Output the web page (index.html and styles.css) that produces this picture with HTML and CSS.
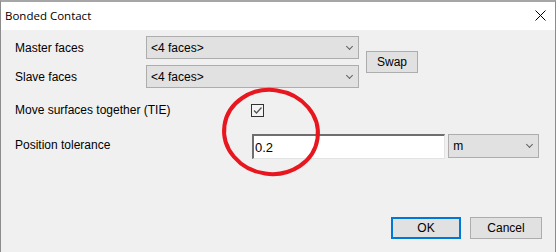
FILE: index.html
```html
<!DOCTYPE html>
<html lang="en">
<head>
  <meta charset="UTF-8">
  <title>Bonded Contact</title>
  <link rel="stylesheet" href="styles.css">
</head>
<body>
  <div class="window">
    <div class="titlebar">
      <span class="title">Bonded Contact</span>
      <svg class="close" width="11" height="11" viewBox="0 0 11 11">
        <path d="M0.5 0.5 L10.5 10.5 M10.5 0.5 L0.5 10.5" stroke="#000" stroke-width="1"/>
      </svg>
    </div>
    <div class="content">
      <div class="faces">
        <div class="pairs">
          <span class="label">Master faces</span>
          <div class="combo wide"><span>&lt;4 faces&gt;</span><i class="chev"></i></div>
          <span class="label">Slave faces</span>
          <div class="combo wide"><span>&lt;4 faces&gt;</span><i class="chev"></i></div>
        </div>
        <div class="btn swap">Swap</div>
      </div>
      <div class="options">
        <span class="label">Move surfaces together (TIE)</span>
        <div class="check">
          <svg width="11" height="11" viewBox="0 0 11 11">
            <path d="M2 5.5 L4.5 8 L9.5 2.5" fill="none" stroke="#555" stroke-width="1.3"/>
          </svg>
        </div>
        <span class="label pos">Position tolerance</span>
        <div class="field-row">
          <div class="textfield">0.2</div>
          <div class="combo unit"><span>m</span><i class="chev"></i></div>
        </div>
      </div>
      <div class="footer">
        <div class="btn ok">OK</div>
        <div class="btn cancel">Cancel</div>
      </div>
    </div>
    <svg class="mark" width="110" height="96" viewBox="0 0 110 96">
      <ellipse cx="53" cy="47" rx="47" ry="42" fill="none" stroke="#e8161e" stroke-width="4" transform="rotate(8 53 47)"/>
    </svg>
  </div>
</body>
</html>
```

FILE: styles.css
```css
* {
  margin: 0;
  padding: 0;
  box-sizing: border-box;
}
body {
  width: 556px;
  height: 252px;
  overflow: hidden;
  font-family: "Liberation Sans", Arial, sans-serif;
  font-size: 12px;
  color: #000;
}
.window {
  position: relative;
  width: 556px;
  height: 252px;
  border: 1px solid #8c8c8c;
  border-top: 2px solid #a6a6a6;
  border-bottom: none;
  background-color: #f0f0f0;
  display: flex;
  flex-direction: column;
}
.titlebar {
  height: 28px;
  background-color: #fff;
  display: flex;
  align-items: center;
  justify-content: space-between;
  padding-left: 4px;
  padding-right: 9px;
}
.title {
  font-family: "Open Sans", "Liberation Sans", sans-serif;
  font-size: 11.5px;
  margin-top: -1px;
}
.close {
  margin-top: -2px;
}
.content {
  flex: 1;
  display: flex;
  flex-direction: column;
  padding: 6px 13px 13px 14px;
}
.faces {
  display: flex;
  align-items: center;
}
.pairs {
  display: grid;
  grid-template-columns: 131px 213px;
  row-gap: 6px;
  align-items: center;
}
.label {
  white-space: nowrap;
}
.combo {
  height: 23px;
  background-color: #e1e1e1;
  border: 1px solid #adadad;
  display: flex;
  align-items: center;
  justify-content: space-between;
  padding: 0 6px 0 4px;
}
.chev {
  width: 5px;
  height: 5px;
  border-right: 1px solid #606060;
  border-bottom: 1px solid #606060;
  transform: rotate(45deg);
  margin-top: -3px;
}
.btn {
  height: 22px;
  background-color: #e1e1e1;
  border: 1px solid #adadad;
  display: flex;
  align-items: center;
  justify-content: center;
}
.swap {
  width: 52px;
  margin-left: 7px;
}
.options {
  display: grid;
  grid-template-columns: 236px 288px;
  align-items: center;
  margin-top: 15px;
  row-gap: 17px;
}
.pos {
  margin-top: -3px;
}
.check {
  width: 13px;
  height: 13px;
  border: 1px solid #333;
  background-color: #f4f4f4;
  display: flex;
  align-items: center;
  justify-content: center;
}
.field-row {
  display: flex;
  gap: 3px;
  margin-left: 1px;
}
.textfield {
  width: 194px;
  height: 25px;
  background-color: #fff;
  border: 1px solid #e3e3e3;
  border-top: 2px solid #6e6e6e;
  border-left: 2px solid #6e6e6e;
  padding-left: 1px;
  display: flex;
  align-items: center;
  font-size: 13px;
}
.unit {
  width: 91px;
  height: 24px;
}
.footer {
  margin-top: auto;
  display: flex;
  justify-content: flex-end;
  gap: 9px;
}
.ok {
  width: 70px;
  border: 2px solid #0078d7;
}
.cancel {
  width: 72px;
}
.mark {
  position: absolute;
  left: 217px;
  top: 83px;
}
```
